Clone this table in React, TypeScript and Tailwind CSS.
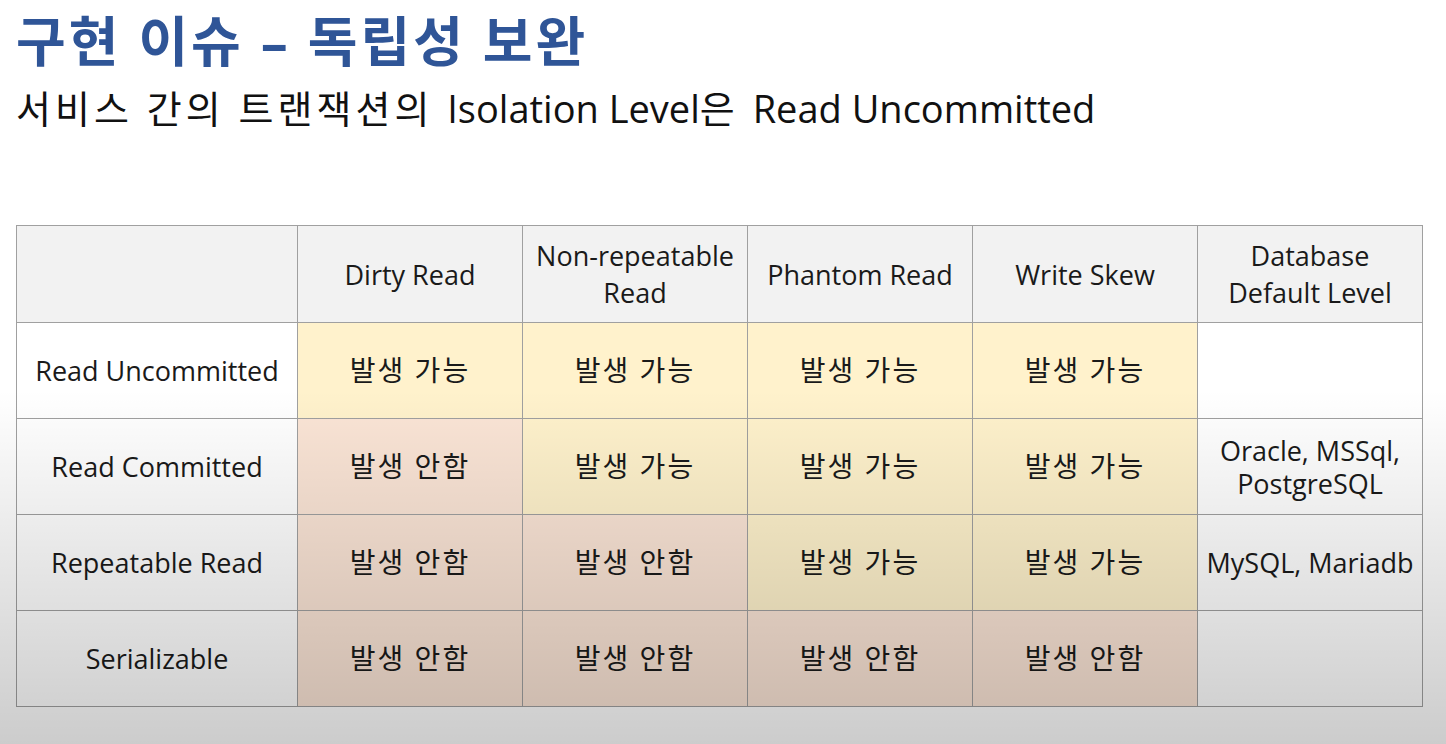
export default function App() {
  const cols = [['Dirty Read'], ['Non-repeatable', 'Read'], ['Phantom Read'], ['Write Skew'], ['Database', 'Default Level']];
  const rows = [
    { label: 'Read Uncommitted', cells: [true, true, true, true], db: '' },
    { label: 'Read Committed', cells: [false, true, true, true], db: 'Oracle, MSSql, PostgreSQL' },
    { label: 'Repeatable Read', cells: [false, false, true, true], db: 'MySQL, Mariadb' },
    { label: 'Serializable', cells: [false, false, false, false], db: '' },
  ];
  const font = { fontFamily: "'Open Sans', 'Noto Sans CJK KR', sans-serif" };

  return (
    <div className="relative w-[1446px] h-[744px] bg-white overflow-hidden text-black" style={font}>
      <div className="flex flex-col pl-4">
        <h1 className="mt-[8px] text-[54px] leading-[66px] font-bold text-[#2f5597] tracking-[3px]">
          구현 이슈 – 독립성 보완
        </h1>
        <p className="mt-[11px] text-[38px] leading-[46px] text-[#111]">
          <span className="tracking-[4px]">서비스 간의 트랜잭션의 </span>
          Isolation Level<span className="tracking-[4px]">은 </span>Read Uncommitted
        </p>

        <table className="mt-[94px] w-[1407px] border-collapse table-fixed text-[27px] leading-[33px] text-[#1a1a1a]">
          <colgroup>
            <col className="w-[281px]" />
            <col className="w-[225px]" />
            <col className="w-[225px]" />
            <col className="w-[225px]" />
            <col className="w-[225px]" />
            <col className="w-[225px]" />
          </colgroup>
          <thead>
            <tr className="h-[97px] bg-[#f2f2f2]">
              <th className="border border-[#a0a0a0] font-normal" />
              {cols.map((c) => (
                <th
                  key={c[0]}
                  className="border border-[#a0a0a0] font-normal px-0 text-center whitespace-nowrap leading-[37px]"
                >
                  {c[0]}
                  {c[1] && (
                    <>
                      <br />
                      {c[1]}
                    </>
                  )}
                </th>
              ))}
            </tr>
          </thead>
          <tbody>
            {rows.map((r) => (
              <tr key={r.label} className="h-[96px]">
                <td className="border border-[#a0a0a0] text-center bg-white">{r.label}</td>
                {r.cells.map((ok, i) => (
                  <td
                    key={i}
                    className={`border border-[#a0a0a0] text-center text-[28px] tracking-[2px] ${
                      ok ? 'bg-[#fff2cc]' : 'bg-[#fbe5d6]'
                    }`}
                  >
                    {ok ? '발생 가능' : '발생 안함'}
                  </td>
                ))}
                <td className="border border-[#a0a0a0] text-center bg-white px-1">{r.db}</td>
              </tr>
            ))}
          </tbody>
        </table>
      </div>

      {/* video bottom shade */}
      <div className="pointer-events-none absolute left-0 right-0 top-[390px] bottom-0 bg-gradient-to-b from-black/0 to-black/20" />
    </div>
  );
}
